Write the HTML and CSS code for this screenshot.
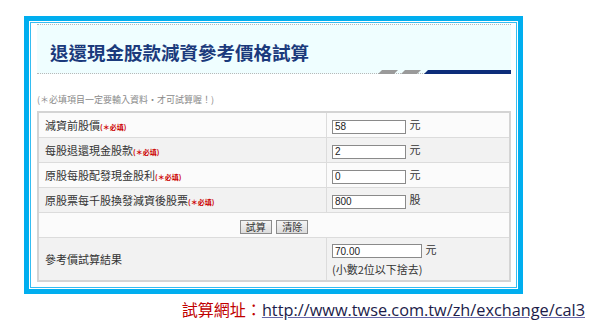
FILE: index.html
```html
<!DOCTYPE html>
<html lang="zh-Hant">
<head>
    <meta charset="UTF-8">
    <meta name="viewport" content="width=device-width, initial-scale=1.0">
    <title>退還現金股款減資參考價格試算</title>
    <link rel="stylesheet" href="styles.css">
</head>
<body>
    <div class="frame">
        <div class="frame-inner">
            <div class="title-box">
                <h1>退還現金股款減資參考價格試算</h1>
                <div class="title-deco">
                    <span class="slash"></span>
                    <span class="slash"></span>
                    <span class="bar"></span>
                </div>
            </div>
            <p class="notice">(＊必填項目一定要輸入資料‧才可試算喔！)</p>
            <table class="calc">
                <tr>
                    <td class="label">減資前股價<span class="req">(＊必填)</span></td>
                    <td class="field"><input type="text" value="58"> 元</td>
                </tr>
                <tr>
                    <td class="label">每股退還現金股款<span class="req">(＊必填)</span></td>
                    <td class="field"><input type="text" value="2"> 元</td>
                </tr>
                <tr>
                    <td class="label">原股每股配發現金股利<span class="req">(＊必填)</span></td>
                    <td class="field"><input type="text" value="0"> 元</td>
                </tr>
                <tr>
                    <td class="label">原股票每千股換發減資後股票<span class="req">(＊必填)</span></td>
                    <td class="field"><input type="text" value="800"> 股</td>
                </tr>
                <tr>
                    <td class="actions" colspan="2">
                        <button>試算</button>
                        <button>清除</button>
                    </td>
                </tr>
                <tr class="result">
                    <td class="label">參考價試算結果</td>
                    <td class="field">
                        <input type="text" class="wide" value="70.00"> 元
                        <div class="hint">(小數2位以下捨去)</div>
                    </td>
                </tr>
            </table>
        </div>
    </div>
    <p class="source">
        <span class="source-label">試算網址：</span><a href="#">http://www.twse.com.tw/zh/exchange/cal3</a>
    </p>
</body>
</html>
```

FILE: styles.css
```css
body {
    margin: 0;
    background-color: #fff;
    font-family: "Liberation Sans", "Noto Sans CJK TC", sans-serif;
}

.frame {
    width: 487px;
    margin: 16px 0 0 24px;
    border: 5px solid #00aeef;
    padding: 1px;
    background-color: #fff;
}

.frame-inner {
    border: 1px solid #33bdf2;
    padding: 1px 5px 5px 6px;
}

.title-box {
    height: 48px;
    background-color: #effeff;
    border-top: 1px dotted #b8b8b8;
    border-bottom: 1px dotted #b8b8b8;
    display: flex;
    flex-direction: column;
    justify-content: space-between;
}

.title-box h1 {
    margin: 15px 0 0 13px;
    font-family: "Noto Sans CJK TC", sans-serif;
    font-size: 18.5px;
    line-height: 24px;
    font-weight: bold;
    color: #1b3a7c;
}

.title-deco {
    display: flex;
    justify-content: flex-end;
    gap: 3px;
    margin-bottom: -1px;
}

.title-deco span {
    height: 4px;
}

.title-deco .slash {
    width: 20px;
    background-color: #9a9a9a;
    clip-path: polygon(4px 0, 100% 0, calc(100% - 4px) 100%, 0 100%);
}

.title-deco .bar {
    width: 87px;
    background-color: #0d2d7a;
    clip-path: polygon(4px 0, 100% 0, 100% 100%, 0 100%);
}

.notice {
    margin: 20px 0 5px 0;
    font-family: "Noto Sans CJK TC", sans-serif;
    font-size: 9px;
    line-height: 12px;
    color: #8a8a8a;
}

.calc {
    width: 474px;
    border-collapse: collapse;
    border: 2px solid #d4d4d4;
    font-family: "Noto Sans CJK TC", sans-serif;
    font-size: 11px;
    color: #333;
}

.calc td {
    height: 24px;
    padding: 0;
    border: 1px solid #dcdcdc;
}

.calc tr:nth-child(odd) td {
    background-color: #fbfbfb;
}

.calc tr:nth-child(even) td {
    background-color: #f2f2f2;
}

.calc .label {
    width: 281px;
    padding-left: 6px;
}

.req {
    font-size: 7px;
    font-weight: bold;
    color: #cc0000;
}

.calc .field {
    padding-left: 5px;
}

.calc input {
    width: 68px;
    height: 12px;
    padding: 0 2px;
    margin: 0 1px 0 0;
    border: 1px solid #8a8a8a;
    font-family: "Liberation Sans", sans-serif;
    font-size: 10px;
    color: #222;
    vertical-align: middle;
    background-color: #fff;
}

.calc input.wide {
    width: 84px;
}

.calc .actions {
    text-align: center;
}

.calc button {
    height: 14px;
    padding: 0 5px;
    margin: 0 1px;
    border: 1px solid #8c8c8c;
    background: linear-gradient(#f4f4f4, #dcdcdc);
    font-family: "Noto Sans CJK TC", sans-serif;
    font-size: 10px;
    line-height: 12px;
    color: #333;
    vertical-align: middle;
}

.result td {
    height: 42px;
}

.hint {
    margin-top: 3px;
    font-size: 11px;
}

.source {
    margin: 5px 15px 0 0;
    text-align: right;
    font-size: 16px;
    line-height: 20px;
}

.source-label {
    font-family: "Noto Sans CJK TC", sans-serif;
    color: #c00000;
}

.source a {
    font-family: "Open Sans", sans-serif;
    font-size: 16.3px;
    color: #1c1c4a;
    text-decoration: underline;
    text-decoration-color: #6868a8;
}
```
